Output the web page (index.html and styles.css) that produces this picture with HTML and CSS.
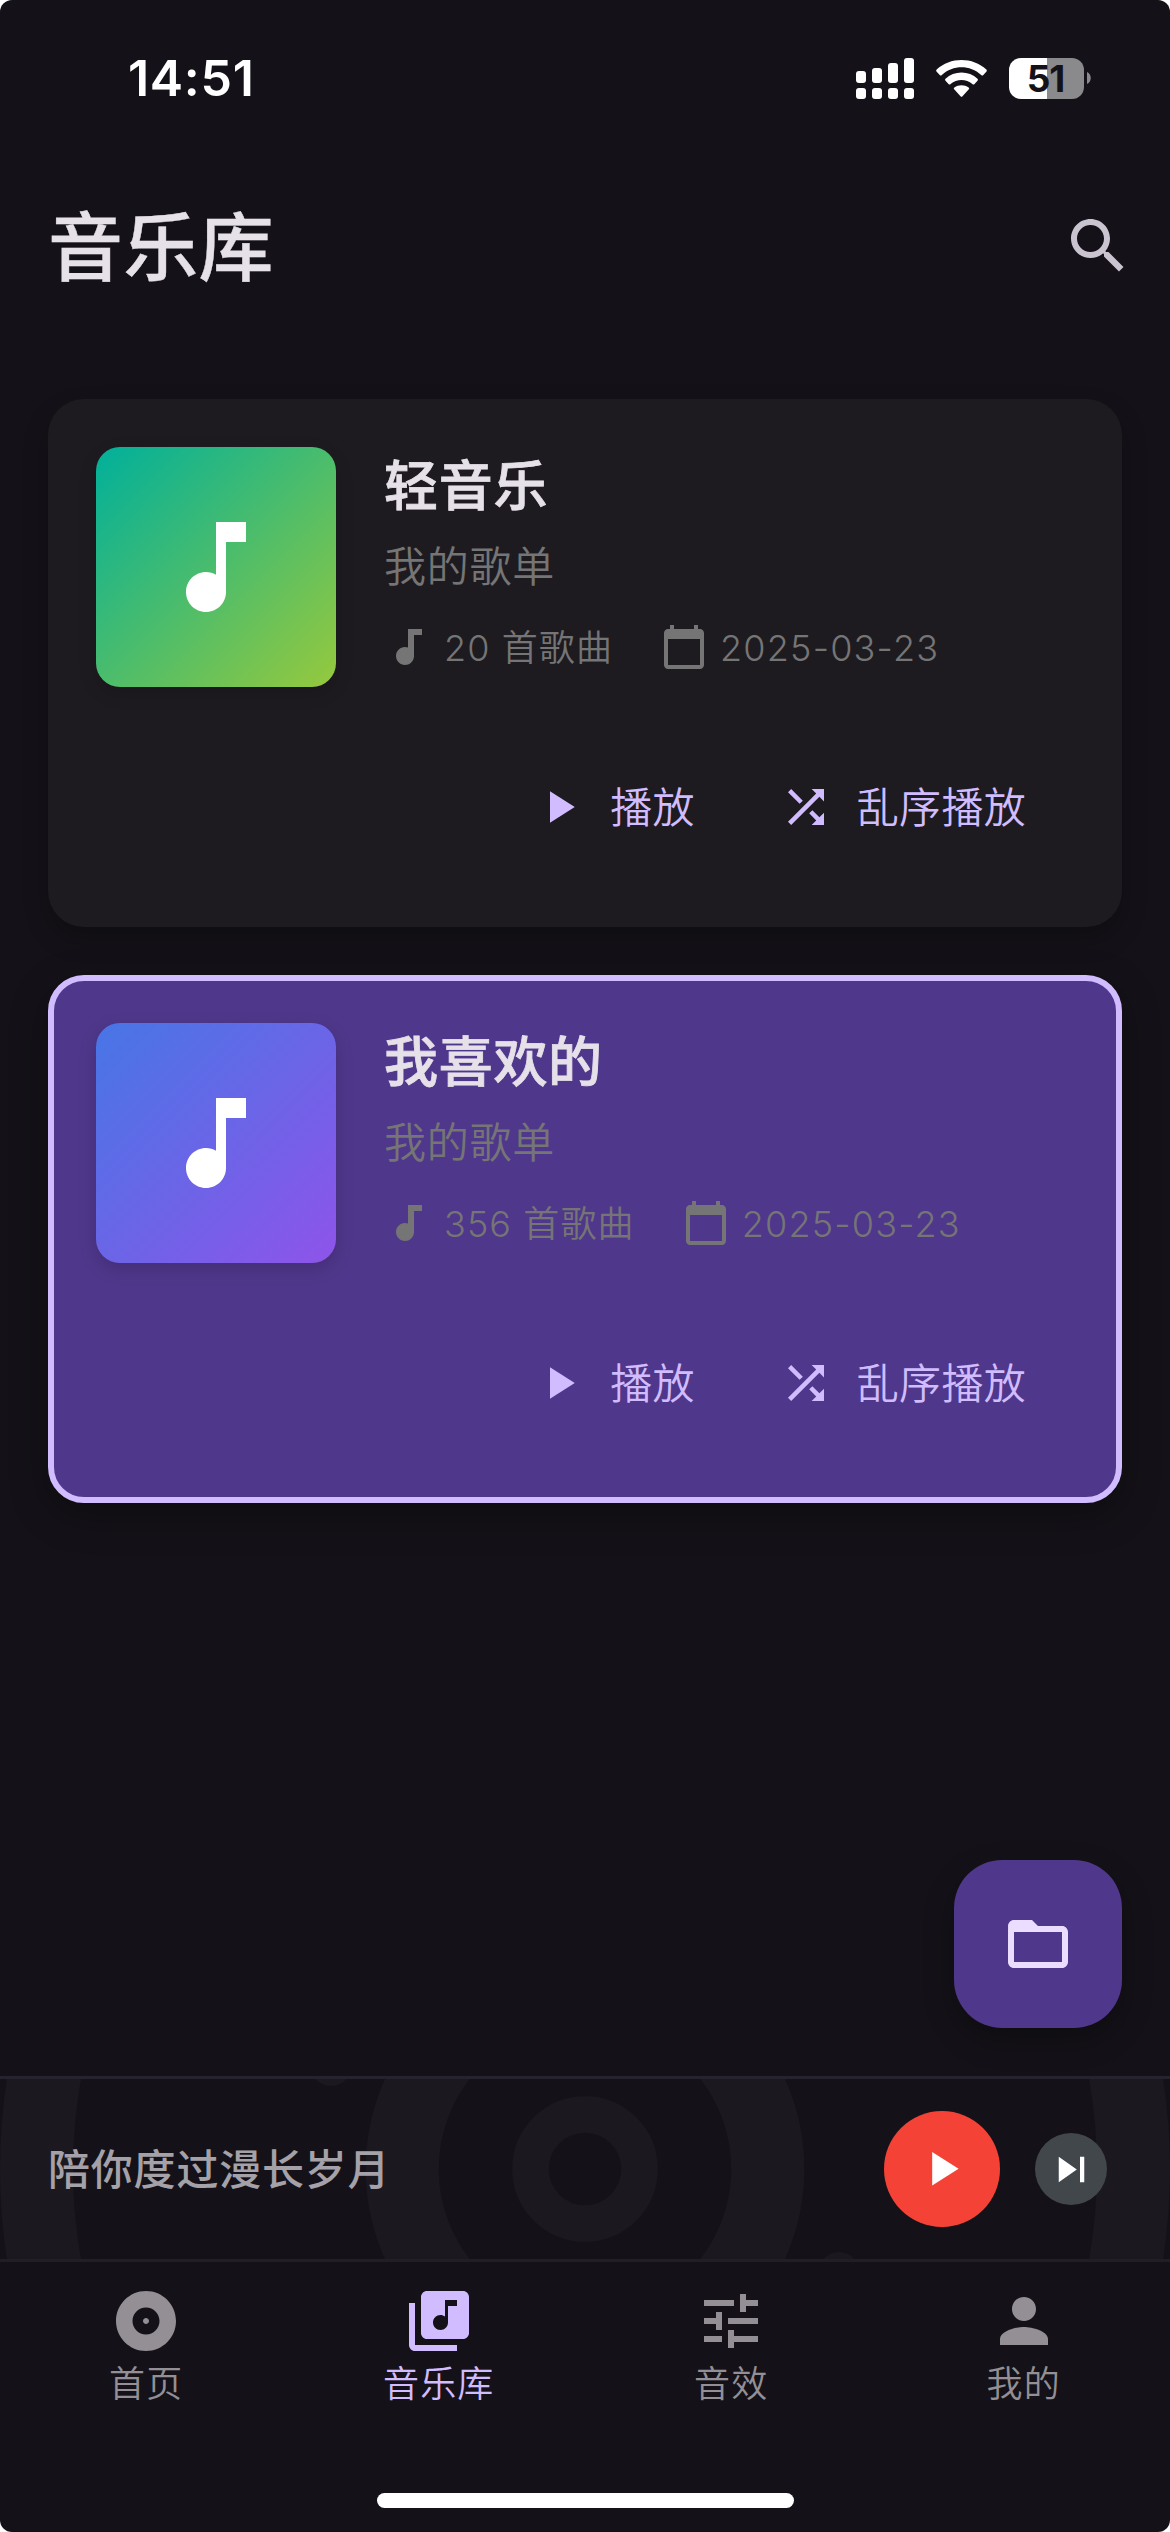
FILE: index.html
```html
<!DOCTYPE html>
<html lang="zh-CN">
<head>
<meta charset="utf-8">
<title>音乐库</title>
<link rel="stylesheet" href="styles.css">
</head>
<body>
<svg class="sprite" aria-hidden="true">
  <symbol id="note" viewBox="0 0 24 24"><path d="M12 3v10.55c-.59-.34-1.27-.55-2-.55-2.21 0-4 1.79-4 4s1.79 4 4 4 4-1.79 4-4V7h4V3h-6z"/></symbol>
  <symbol id="track" viewBox="0 0 24 24"><path d="M12 3v9.28c-.47-.17-.97-.28-1.5-.28C8.01 12 6 14.01 6 16.5S8.01 21 10.5 21c2.31 0 4.2-1.75 4.45-4H15V6h4V3h-7z"/></symbol>
  <symbol id="calendar" viewBox="0 0 24 24"><path d="M20 3h-1V1h-2v2H7V1H5v2H4c-1.1 0-2 .9-2 2v16c0 1.1.9 2 2 2h16c1.1 0 2-.9 2-2V5c0-1.1-.9-2-2-2zm0 18H4V8h16v13z"/></symbol>
  <symbol id="play" viewBox="0 0 24 24"><path d="M8 5v14l11-7z"/></symbol>
  <symbol id="shuffle" viewBox="0 0 24 24"><path d="M10.59 9.17L5.41 4 4 5.41l5.17 5.17 1.42-1.41zM14.5 4l2.04 2.04L4 18.59 5.41 20 17.96 7.46 20 9.5V4h-5.5zm.33 9.41l-1.41 1.41 3.13 3.13L14.5 20H20v-5.5l-2.04 2.04-3.13-3.13z"/></symbol>
</svg>
<div class="screen">
  <header class="status">
    <span class="clock">14:51</span>
    <div class="indicators">
      <svg class="signal" viewBox="0 0 58 41">
        <rect x="0" y="13" width="10" height="12" rx="3"/><rect x="16" y="10" width="10" height="15" rx="3"/><rect x="32" y="5" width="10" height="20" rx="3"/><rect x="48" y="0" width="10" height="25" rx="3"/>
        <rect x="0" y="30" width="10" height="11" rx="3"/><rect x="16" y="30" width="10" height="11" rx="3"/><rect x="32" y="30" width="10" height="11" rx="3"/><rect x="48" y="30" width="10" height="11" rx="3"/>
      </svg>
      <svg class="wifi" viewBox="0 0 51 37">
        <path d="M.7 11.7a1.5 1.5 0 0 1 0-2.1C14-3.2 37-3.2 50.3 9.6a1.5 1.5 0 0 1 0 2.1L47.3 15a1.5 1.5 0 0 1-2.1 0C34 4.7 17 4.7 5.8 15a1.5 1.5 0 0 1-2.1 0z"/>
        <path d="M9.5 20.8a1.5 1.5 0 0 1 0-2.1C18 10.5 33 10.5 41.5 18.7a1.5 1.5 0 0 1 0 2.1L38.5 24a1.5 1.5 0 0 1-2.1 0C30.2 18.6 20.8 18.6 14.6 24a1.5 1.5 0 0 1-2.1 0z"/>
        <path d="M18.4 29.6a1.4 1.4 0 0 1 0-2.1C22.4 24.5 28.6 24.5 32.6 27.5a1.4 1.4 0 0 1 0 2.1L26.5 36.2a1.3 1.3 0 0 1-2 0z"/>
      </svg>
      <div class="battery">
        <div class="battery-cell">51</div>
        <svg class="battery-nub" viewBox="0 0 4 12"><path d="M0 0c5 2 5 10 0 12z"/></svg>
      </div>
    </div>
  </header>

  <div class="appbar">
    <h1>音乐库</h1>
    <svg class="icon icon-lg search" viewBox="0 0 24 24"><path d="M15.5 14h-.79l-.28-.27C15.41 12.59 16 11.11 16 9.5 16 5.91 13.09 3 9.5 3S3 5.91 3 9.5 5.91 16 9.5 16c1.61 0 3.09-.59 4.23-1.57l.27.28v.79l5 4.99L20.49 19l-4.99-5zm-6 0C7.01 14 5 11.99 5 9.5S7.01 5 9.5 5 14 7.01 14 9.5 11.99 14 9.5 14z"/></svg>
  </div>

  <main class="list">
    <article class="card">
      <div class="top">
        <div class="cover cover-green"><svg class="icon"><use href="#note"/></svg></div>
        <div class="info">
          <h2>轻音乐</h2>
          <p class="sub">我的歌单</p>
          <div class="meta">
            <svg class="icon"><use href="#track"/></svg><span class="count">20 首歌曲</span>
            <svg class="icon"><use href="#calendar"/></svg><span>2025-03-23</span>
          </div>
        </div>
      </div>
      <div class="actions">
        <div class="button"><svg class="icon"><use href="#play"/></svg><span>播放</span></div>
        <div class="button"><svg class="icon"><use href="#shuffle"/></svg><span>乱序播放</span></div>
      </div>
    </article>

    <article class="card selected">
      <div class="top">
        <div class="cover cover-violet"><svg class="icon"><use href="#note"/></svg></div>
        <div class="info">
          <h2>我喜欢的</h2>
          <p class="sub">我的歌单</p>
          <div class="meta">
            <svg class="icon"><use href="#track"/></svg><span class="count">356 首歌曲</span>
            <svg class="icon"><use href="#calendar"/></svg><span>2025-03-23</span>
          </div>
        </div>
      </div>
      <div class="actions">
        <div class="button"><svg class="icon"><use href="#play"/></svg><span>播放</span></div>
        <div class="button"><svg class="icon"><use href="#shuffle"/></svg><span>乱序播放</span></div>
      </div>
    </article>
  </main>

  <div class="fab-row">
    <div class="fab"><svg class="icon icon-lg" viewBox="0 0 24 24"><path d="M20 6h-8l-2-2H4c-1.1 0-1.99.9-1.99 2L2 18c0 1.1.9 2 2 2h16c1.1 0 2-.9 2-2V8c0-1.1-.9-2-2-2zm0 12H4V8h16v10z"/></svg></div>
  </div>

  <section class="player">
    <svg class="disc" viewBox="0 0 1170 180">
      <g class="rings"><circle cx="585" cy="90" r="548.5"/><circle cx="585" cy="90" r="182.8"/></g>
      <circle class="hub" cx="585" cy="90" r="54.5"/>
      <circle cx="331" cy="-13" r="20"/><circle cx="839" cy="193" r="20"/>
    </svg>
    <span class="lyric">陪你度过漫长岁月</span>
    <div class="round play"><svg class="icon"><use href="#play"/></svg></div>
    <div class="round next"><svg class="icon" viewBox="0 0 24 24"><path d="M6 18l8.5-6L6 6v12zM16 6v12h2V6h-2z"/></svg></div>
  </section>

  <nav class="tabs">
    <div class="tab"><svg class="icon icon-lg" viewBox="0 0 24 24"><path d="M12 2C6.48 2 2 6.48 2 12s4.48 10 10 10 10-4.48 10-10S17.52 2 12 2zm0 14.5c-2.49 0-4.5-2.01-4.5-4.5S9.51 7.5 12 7.5s4.5 2.01 4.5 4.5-2.01 4.5-4.5 4.5zm0-5.5c-.55 0-1 .45-1 1s.45 1 1 1 1-.45 1-1-.45-1-1-1z"/></svg><span>首页</span></div>
    <div class="tab active"><svg class="icon icon-lg" viewBox="0 0 24 24"><path d="M20 2H8c-1.1 0-2 .9-2 2v12c0 1.1.9 2 2 2h12c1.1 0 2-.9 2-2V4c0-1.1-.9-2-2-2zm-2 5h-3v5.5c0 1.38-1.12 2.5-2.5 2.5S10 13.88 10 12.5s1.12-2.5 2.5-2.5c.57 0 1.08.19 1.5.51V5h4v2zM4 6H2v14c0 1.1.9 2 2 2h14v-2H4V6z"/></svg><span>音乐库</span></div>
    <div class="tab"><svg class="icon icon-lg" viewBox="0 0 24 24"><path d="M3 17v2h6v-2H3zM3 5v2h10V5H3zm10 16v-2h8v-2h-8v-2h-2v6h2zM7 9v2H3v2h4v2h2V9H7zm14 4v-2H11v2h10zm-6-4h2V7h4V5h-4V3h-2v6z"/></svg><span>音效</span></div>
    <div class="tab"><svg class="icon icon-lg" viewBox="0 0 24 24"><path d="M12 12c2.21 0 4-1.79 4-4s-1.79-4-4-4-4 1.79-4 4 1.79 4 4 4zm0 2c-2.67 0-8 1.34-8 4v2h16v-2c0-2.66-5.33-4-8-4z"/></svg><span>我的</span></div>
  </nav>
  <div class="home-indicator"></div>
</div>
</body>
</html>
```
FILE: styles.css
```css
* { box-sizing: border-box; margin: 0; padding: 0; }

body {
  background: #fff;
  font-family: Inter, "Noto Sans CJK SC", sans-serif;
}

.sprite { display: none; }

.screen {
  display: flex;
  flex-direction: column;
  width: 1170px;
  height: 2532px;
  overflow: hidden;
  border-radius: 12px;
  background: #141218;
  color: #e6e0e9;
}

.icon { flex: none; display: block; fill: currentColor; }
.icon-lg { width: 72px; height: 72px; }

/* Status bar */
.status {
  display: flex;
  justify-content: space-between;
  align-items: center;
  height: 141px;
  padding: 15px 79px 0 128px;
  color: #fff;
}
.clock { font-size: 50px; font-weight: 600; letter-spacing: .7px; line-height: 60px; }
.indicators { display: flex; align-items: center; fill: #fff; }
.signal { width: 58px; height: 41px; }
.wifi { width: 51px; height: 37px; margin-left: 22px; }
.battery { display: flex; align-items: center; gap: 3px; margin-left: 22px; }
.battery-cell {
  width: 75px;
  height: 41px;
  padding-right: 2px;
  border-radius: 12px;
  background: linear-gradient(90deg, #fff 38px, #8a898c 38px);
  color: #141218;
  font-size: 37px;
  font-weight: 700;
  letter-spacing: -1px;
  line-height: 41px;
  text-align: center;
}
.battery-nub { width: 4px; height: 12px; fill: #8a898c; }

/* Title bar */
.appbar {
  display: flex;
  justify-content: space-between;
  align-items: center;
  height: 210px;
  padding: 0 36px 0 48px;
}
h1 {
  padding-top: 4px;
  font-size: 75px;
  font-weight: 500;
  line-height: 96px;
  letter-spacing: .3px;
  -webkit-text-stroke: .4px currentColor;
}
.search { color: #cac4d0; }

/* Playlists */
.list { display: flex; flex-direction: column; gap: 48px; padding: 48px 48px 0; }
.card {
  height: 528px;
  padding: 48px;
  border-radius: 36px;
  background: #1d1b20;
  box-shadow: 0 12px 24px rgba(0, 0, 0, .26);
}
.selected {
  padding: 42px;
  border: 6px solid #d0bcff;
  background: #4f378b;
  box-shadow: 0 12px 36px rgba(0, 0, 0, .34);
}
.top { display: flex; gap: 48px; }
.cover {
  display: grid;
  place-items: center;
  width: 240px;
  height: 240px;
  border-radius: 24px;
  color: #fff;
  box-shadow: 0 6px 18px rgba(0, 0, 0, .15);
}
.cover .icon { width: 120px; height: 120px; }
.cover-green { background: linear-gradient(135deg, #00b09b, #96c93d); }
.cover-violet { background: linear-gradient(135deg, #4776e6, #8e54e9); }
h2 {
  padding-top: 2px;
  font-size: 54px;
  font-weight: 500;
  line-height: 75px;
  letter-spacing: .7px;
  -webkit-text-stroke: .8px currentColor;
}
.sub {
  margin-top: 13px;
  font-size: 42px;
  font-weight: 350;
  line-height: 60px;
  letter-spacing: .75px;
  color: #757575;
}
.meta {
  display: flex;
  align-items: center;
  gap: 12px;
  margin-top: 26px;
  height: 48px;
  font-size: 36px;
  font-weight: 350;
  line-height: 48px;
  letter-spacing: 1.2px;
  white-space: nowrap;
  color: #757575;
}
.meta span { padding-top: 1px; }
.meta .icon { width: 48px; height: 48px; }
.count { margin-right: 35px; letter-spacing: 1.1px; }

.actions { display: flex; justify-content: flex-end; margin-top: 48px; }
.button {
  display: flex;
  align-items: center;
  gap: 24px;
  height: 144px;
  padding: 0 48px 0 36px;
  font-size: 42px;
  font-weight: 350;
  line-height: 60px;
  letter-spacing: .3px;
  color: #d0bcff;
}
.button span { padding-top: 1px; }
.button .icon { width: 54px; height: 54px; }

/* Floating folder button */
.fab-row { display: flex; justify-content: flex-end; margin-top: auto; padding: 0 48px 48px; }
.fab {
  display: grid;
  place-items: center;
  width: 168px;
  height: 168px;
  border-radius: 48px;
  background: #4f378b;
  color: #eaddff;
  box-shadow: 0 12px 30px rgba(0, 0, 0, .3);
}

/* Mini player */
.player {
  position: relative;
  flex: none;
  display: flex;
  align-items: center;
  height: 186px;
  padding: 0 63px 0 48px;
  border-top: 3px solid #26232f;
  border-bottom: 3px solid #211f26;
}
.disc { position: absolute; inset: 0; width: 1170px; height: 180px; fill: #1b191f; }
.rings { fill: none; stroke: #1b191f; stroke-width: 73px; }
.hub { fill: none; stroke: #1b191f; stroke-width: 36.5px; }
.lyric {
  position: relative;
  margin-right: auto;
  padding-top: 2px;
  font-size: 42px;
  font-weight: 500;
  line-height: 60px;
  letter-spacing: .8px;
  color: #a5a1a8;
}
.round { position: relative; display: grid; place-items: center; border-radius: 50%; color: #fff; }
.play { width: 116px; height: 116px; background: #f44336; }
.play .icon { width: 57.6px; height: 57.6px; }
.next { width: 72px; height: 72px; margin-left: 35px; background: #42474c; }
.next .icon { width: 51px; height: 51px; }

/* Bottom navigation */
.tabs { display: grid; grid-template-columns: repeat(4, 1fr); height: 231px; padding-top: 23px; color: #938f94; }
.tab {
  display: flex;
  flex-direction: column;
  align-items: center;
  gap: 2px;
  font-size: 36px;
  font-weight: 350;
  line-height: 50px;
  letter-spacing: 1.2px;
}
.active { color: #d0bcff; }
.home-indicator {
  flex: none;
  align-self: center;
  width: 417px;
  height: 15px;
  margin-bottom: 24px;
  border-radius: 7.5px;
  background: #fff;
}
```
